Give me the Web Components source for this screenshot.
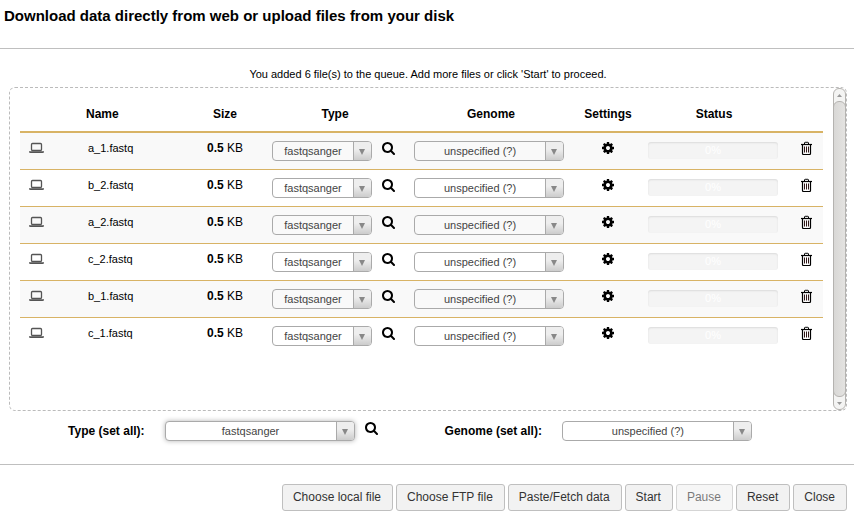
<!DOCTYPE html>
<html lang="en">
<head>
<meta charset="utf-8">
<title>Upload files</title>
<style>
  body { margin: 0; background: #fff; color: #000; font: 12px/17px "Liberation Sans", Arial, sans-serif; }
</style>
</head>
<body>
<upload-dialog>
  <span slot="title">Download data directly from web or upload files from your disk</span>
  <span slot="info">You added 6 file(s) to the queue. Add more files or click 'Start' to proceed.</span>
  <upload-queue files="a_1.fastq b_2.fastq a_2.fastq c_2.fastq b_1.fastq c_1.fastq"></upload-queue>
  <set-all slot="defaults"></set-all>
  <push-button slot="actions">Choose local file</push-button>
  <push-button slot="actions">Choose FTP file</push-button>
  <push-button slot="actions">Paste/Fetch data</push-button>
  <push-button slot="actions">Start</push-button>
  <push-button slot="actions" disabled>Pause</push-button>
  <push-button slot="actions">Reset</push-button>
  <push-button slot="actions">Close</push-button>
</upload-dialog>

<script>
const define = (name, render) => customElements.define(name, class extends HTMLElement {
  constructor() { super(); this.attachShadow({ mode: 'open' }); }
  connectedCallback() { this.shadowRoot.innerHTML = render(this); }
});

const icons = {
  search: '<svg viewBox="64 0 1792 1792" aria-hidden="true"><path d="M1216 832q0-185-131.5-316.5t-316.5-131.5-316.5 131.5-131.5 316.5 131.5 316.5 316.5 131.5 316.5-131.5 131.5-316.5zm512 832q0 52-38 90t-90 38q-54 0-90-38l-343-342q-179 124-399 124-143 0-273.5-55.5t-225-150-150-225-55.5-273.5 55.5-273.5 150-225 225-150 273.500-55.5 273.500 55.5 225 150 150 225 55.5 273.500q0 220-124 399l343 343q37 37 37 90z"/></svg>',
  cog: '<svg viewBox="0 0 1792 1792" aria-hidden="true"><path d="M1152 896q0-106-75-181t-181-75-181 75-75 181 75 181 181 75 181-75 75-181zm512-109v222q0 12-8 23t-20 13l-185 28q-19 54-39 91 35 50 107 138 10 12 10 25t-9 23q-27 37-99 108t-94 71q-12 0-26-9l-138-108q-44 23-91 38-16 136-29 186-7 28-36 28h-222q-14 0-24.5-8.5t-11.5-21.5l-28-184q-49-16-90-37l-141 107q-10 9-25 9-14 0-25-11-126-114-165-168-7-10-7-23 0-12 8-23 15-21 51-66.5t54-70.5q-27-50-41-99l-183-27q-13-2-21-12.5t-8-23.5v-222q0-12 8-23t19-13l186-28q14-46 39-92-40-57-107-138-10-12-10-24 0-10 9-23 26-36 98.5-107.5t94.5-71.5q13 0 26 10l138 107q44-23 91-38 16-136 29-186 7-28 36-28h222q14 0 24.5 8.5t11.5 21.5l28 184q49 16 90 37l142-107q9-9 24-9 13 0 25 10 129 119 165 170 7 8 7 22 0 12-8 23-15 21-51 66.5t-54 70.5q26 50 41 98l183 28q13 2 21 12.5t8 23.5z"/></svg>',
  trash: `<svg viewBox="0 0 14 14" aria-hidden="true"><g fill="none" stroke="currentColor">
    <path d="M2 3.500h11" stroke-width="1.200"/><path d="M5.500 3.500V2q0-.700.700-.700h2.600q.700 0 .700.700v1.500"/>
    <path d="M3.500 4v8.500q0 1 1 1h6q1 0 1-1V4" stroke-width="1.200"/></g>
    <path d="M5 5.500h1v6H5zM7 5.500h1v6H7zM9 5.500h1v6H9z" fill="#301818"/></svg>`
};

define('icon-button', el => `
  <style>
    :host { display: inline-block; width: 14px; height: 14px; }
    button { display: block; padding: 0; border: 0; background: none; color: inherit; cursor: pointer; }
    svg { display: block; width: 14px; height: 14px; fill: currentColor; }
  </style>
  <button type="button" aria-label="${el.getAttribute('label')}">${icons[el.getAttribute('icon')]}</button>`);

define('laptop-icon', () => `
  <style>
    :host { display: block; width: 15px; height: 14px; }
    svg { display: block; }
  </style>
  <svg width="15" height="14" viewBox="0 0 15 14" aria-hidden="true">
    <rect x="2.500" y="2.500" width="10" height="7" rx="1" fill="none" stroke="#555" stroke-width="1.300"/>
    <path d="M0 10.300h15v.700q0 1-1.500 1h-12q-1.500 0-1.500-1z" fill="#555"/>
  </svg>`);

define('select-box', el => `
  <style>
    :host { display: inline-flex; align-items: center; gap: 20px; color: #444; }
    label { color: #000; font-weight: bold; }
    .box { display: flex; box-sizing: border-box; width: var(--select-width, 100px); height: 20px;
      border: 1px solid #aaa; border-radius: 4px; overflow: hidden; background: #fff; }
    :host([plain]) .box { background: none; }
    :host([focused]) .box { box-shadow: 0 0 5px rgba(0,0,0,.3); }
    select { flex: 1; min-width: 0; margin: 0 -18px 0 0; padding: 0 18px 0 0; border: 0; outline: 0; appearance: none;
      background: none; color: inherit; font: 11px/16px "Liberation Sans", Arial, sans-serif; text-align: center;
      text-align-last: center; z-index: 1; }
    .arrow { box-sizing: border-box; width: 18px; display: grid; place-items: center; padding: 2px 1px 0 0;
      border-left: 1px solid #aaa; background: linear-gradient(#eee 40%, #ccc); }
    svg { display: block; }
  </style>
  ${el.hasAttribute('caption') ? `<label for="choice">${el.getAttribute('caption')}</label>` : ''}
  <div class="box">
    <select id="choice" ${el.hasAttribute('label') ? `aria-label="${el.getAttribute('label')}"` : ''}>
      <option>${el.getAttribute('value')}</option>
    </select>
    <span class="arrow"><svg width="6" height="6" aria-hidden="true"><path d="M0 0h6L3 6z" fill="#888"/></svg></span>
  </div>`);

define('progress-bar', () => `
  <style>
    :host { display: block; height: 17px; margin-top: 1px; border-radius: 3px; background: #f4f4f4;
      box-shadow: inset 0 1px 2px rgba(0,0,0,.1); color: #fff; font-size: 11px; line-height: 17px; text-align: center; }
  </style>
  <div role="progressbar" aria-valuenow="0" aria-label="Upload progress">0%</div>`);

define('scroll-rail', () => `
  <style>
    :host { display: flex; flex-direction: column; box-sizing: border-box; width: 13px; border: 1px solid #b5b3b0;
      border-radius: 6px; background: #f4f4f3; overflow: hidden; }
    svg { display: block; flex: none; }
    .thumb { flex: 1; margin: 0 -1px; border: 1px solid #b5b3b0; border-radius: 6px;
      background: linear-gradient(90deg, #d9d8d6, #e4e3e1); }
  </style>
  <svg width="11" height="12" aria-hidden="true"><path d="M3 8h5L5.500 5z" fill="#999"/></svg>
  <div class="thumb"></div>
  <svg width="11" height="12" aria-hidden="true"><path d="M3 5h5L5.500 8z" fill="#999"/></svg>`);

define('upload-queue', el => `
  <style>
    :host { display: flex; box-sizing: border-box; min-height: 324px; border: 1px dashed #bbb; border-radius: 6px; }
    .content { flex: 1; padding: 10px; }
    table { width: 100%; table-layout: fixed; border-collapse: separate; border-spacing: 0; }
    th { height: 33px; padding: 0; border-bottom: 2px solid #d8b365; text-align: center; vertical-align: middle; }
    th.name { text-align: left; padding-left: 6px; }
    td { height: 20px; padding: 8px; border-bottom: 1px solid #d8b365; vertical-align: top; line-height: 14px; }
    tr:last-child td { border-bottom: 0; }
    tbody tr:nth-child(odd) { background: #f9f9f9; }
    td.source { padding-left: 9px; }
    td.name { font-size: 11px; }
    td.center { text-align: center; }
    td.status { padding-right: 10px; }
    td.tool { padding-left: 0; padding-right: 0; text-align: center; }
    .pair { display: flex; gap: 10px; }
    .genome { --select-width: 150px; }
  </style>
  <div class="content">
    <table>
      <colgroup><col style="width:60px"><col style="width:106px"><col style="width:78px"><col style="width:142px"><col
        style="width:170px"><col style="width:64px"><col style="width:148px"><col style="width:35px"></colgroup>
      <thead><tr><th></th><th class="name">Name</th><th>Size</th><th>Type</th><th>Genome</th><th>Settings</th><th>Status</th><th></th></tr></thead>
      <tbody>${el.getAttribute('files').split(' ').map(name => `
        <tr>
          <td class="source"><laptop-icon></laptop-icon></td>
          <td class="name">${name}</td>
          <td class="center"><b>0.5</b> KB</td>
          <td><div class="pair"><select-box plain label="Type of ${name}" value="fastqsanger"></select-box><icon-button icon="search" label="Type details"></icon-button></div></td>
          <td><div class="pair genome"><select-box plain label="Genome of ${name}" value="unspecified (?)"></select-box></div></td>
          <td class="tool"><icon-button icon="cog" label="Settings"></icon-button></td>
          <td class="status"><progress-bar></progress-bar></td>
          <td class="tool"><icon-button icon="trash" label="Remove"></icon-button></td>
        </tr>`).join('')}
      </tbody>
    </table>
  </div>
  <scroll-rail></scroll-rail>`);

define('set-all', () => `
  <style>
    :host { display: flex; justify-content: center; gap: 66px; padding-right: 36px; --select-width: 190px; }
    .pair { display: flex; gap: 10px; }
  </style>
  <div class="pair"><select-box focused caption="Type (set all):" value="fastqsanger"></select-box><icon-button icon="search" label="Type details"></icon-button></div>
  <select-box caption="Genome (set all):" value="unspecified (?)"></select-box>`);

define('push-button', el => `
  <style>
    :host { display: block; }
    button { display: block; height: 27px; padding: 0 11px 0 10px; border: 1px solid #bfbfbf; border-radius: 3px;
      background: #f2f2f2; color: #333; font: 12px/17px "Liberation Sans", Arial, sans-serif; white-space: nowrap; }
    button:disabled { opacity: .65; }
  </style>
  <button type="button" ${el.hasAttribute('disabled') ? 'disabled' : ''}><slot></slot></button>`);

define('upload-dialog', () => `
  <style>
    :host { display: block; }
    header { padding: 6px 4px 22px; border-bottom: 1px solid #bfbfbf; }
    h1 { margin: 0; font-size: 15px; line-height: 20px; }
    .body { padding: 17px 7px 23px 9px; }
    .info { margin: 0 0 5px; font-size: 11px; line-height: 16px; text-align: center; }
    .defaults { padding-top: 10px; }
    footer { display: flex; flex-wrap: wrap; justify-content: flex-end; gap: 3px; padding: 19px 7px 5px; border-top: 1px solid #bfbfbf; }
  </style>
  <header><h1><slot name="title"></slot></h1></header>
  <div class="body">
    <p class="info"><slot name="info"></slot></p>
    <slot></slot>
    <div class="defaults"><slot name="defaults"></slot></div>
  </div>
  <footer><slot name="actions"></slot></footer>`);
</script>
</body>
</html>
